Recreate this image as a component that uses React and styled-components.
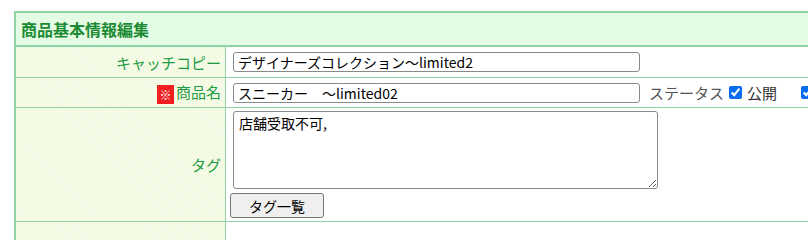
import React from 'react';
import styled, { createGlobalStyle } from 'styled-components';

const GlobalStyle = createGlobalStyle`
  html, body {
    margin: 0;
    padding: 0;
    background: #fff;
    overflow: hidden;
  }
  body {
    font-family: "Noto Sans CJK JP", "Liberation Sans", sans-serif;
  }
`;

const Page = styled.div`
  padding: 11px 0 0 14px;
  width: 900px;
`;

const Table = styled.table`
  border-collapse: collapse;
  width: 880px;
  border: 2px solid #8fd3a6;
`;

const TitleCell = styled.th`
  background: #e4fce4;
  color: #1b8a33;
  font-size: 16px;
  font-weight: bold;
  text-align: left;
  height: 32px;
  padding: 0 0 0 5px;
  border-bottom: 2px solid #8fd3a6;
`;

const Label = styled.th`
  width: 205px;
  padding: 0 4px 0 0;
  text-align: right;
  font-weight: normal;
  font-size: 15px;
  color: #1c9b43;
  background-color: #f1f9de;
  background-image: repeating-linear-gradient(
    45deg,
    rgba(255, 255, 255, 0.5) 0 1px,
    transparent 1px 3px
  );
  border-top: 1px solid #8fd3a6;
  border-right: 1px solid #8fd3a6;
  height: ${p => p.$h}px;
`;

const Required = styled.span`
  display: inline-block;
  background: #f02020;
  color: #fff;
  font-size: 12px;
  width: 17px;
  height: 19px;
  line-height: 19px;
  text-align: center;
  vertical-align: middle;
  margin-right: 2px;
`;

const Value = styled.td`
  padding: ${p => p.$pad || '0 0 0 7px'};
  border-top: 1px solid #8fd3a6;
  vertical-align: ${p => p.$top ? 'top' : 'middle'};
  font-size: 14px;
`;

const Line = styled.div`
  display: flex;
  align-items: center;
  white-space: nowrap;
`;

const TextInput = styled.input`
  box-sizing: border-box;
  width: 407px;
  height: 20px;
  border: 1px solid #8a8a8a;
  border-radius: 3px;
  padding: 0 4px;
  font-family: "Noto Sans CJK JP", "Liberation Sans", sans-serif;
  font-size: 14px;
  color: #000;
  outline: none;
`;

const Status = styled.span`
  color: #555;
  font-size: 15px;
  margin-left: 9px;
`;

const Check = styled.input`
  width: 13px;
  height: 13px;
  margin: 0 5px 0 5px;
  accent-color: #0a6cf0;
`;

const CheckText = styled.span`
  color: #333;
  font-size: 15px;
  margin-right: 19px;
`;

const TagArea = styled.textarea`
  display: block;
  box-sizing: border-box;
  width: 425px;
  height: 78px;
  margin: 3px 0 0 7px;
  border: 1px solid #8a8a8a;
  border-radius: 3px;
  padding: 1px 5px;
  font-family: "Noto Sans CJK JP", "Liberation Sans", sans-serif;
  font-size: 14px;
  resize: both;
  outline: none;
`;

const Button = styled.button`
  display: block;
  box-sizing: border-box;
  width: 94px;
  height: 25px;
  margin: 4px 0 3px 4px;
  background: #efefef;
  border: 1px solid #767676;
  border-radius: 3px;
  font-family: "Noto Sans CJK JP", "Liberation Sans", sans-serif;
  font-size: 14px;
  color: #000;
  padding: 0;
`;

export default function App() {
  return (
    <Page>
      <GlobalStyle />
      <Table>
        <tbody>
          <tr>
            <TitleCell colSpan={2}>商品基本情報編集</TitleCell>
          </tr>
          <tr>
            <Label $h={30}>キャッチコピー</Label>
            <Value>
              <TextInput defaultValue="デザイナーズコレクション〜limited2" />
            </Value>
          </tr>
          <tr>
            <Label $h={29}><Required>※</Required>商品名</Label>
            <Value>
              <Line>
                <TextInput defaultValue="スニーカー　〜limited02" />
                <Status>ステータス</Status>
                <Check type="checkbox" defaultChecked />
                <CheckText>公開</CheckText>
                <Check type="checkbox" defaultChecked />
              </Line>
            </Value>
          </tr>
          <tr>
            <Label $h={113}>タグ</Label>
            <Value $top $pad="0">
              <TagArea defaultValue="店舗受取不可," />
              <Button>タグ一覧</Button>
            </Value>
          </tr>
          <tr>
            <Label $h={30} />
            <Value />
          </tr>
        </tbody>
      </Table>
    </Page>
  );
}
